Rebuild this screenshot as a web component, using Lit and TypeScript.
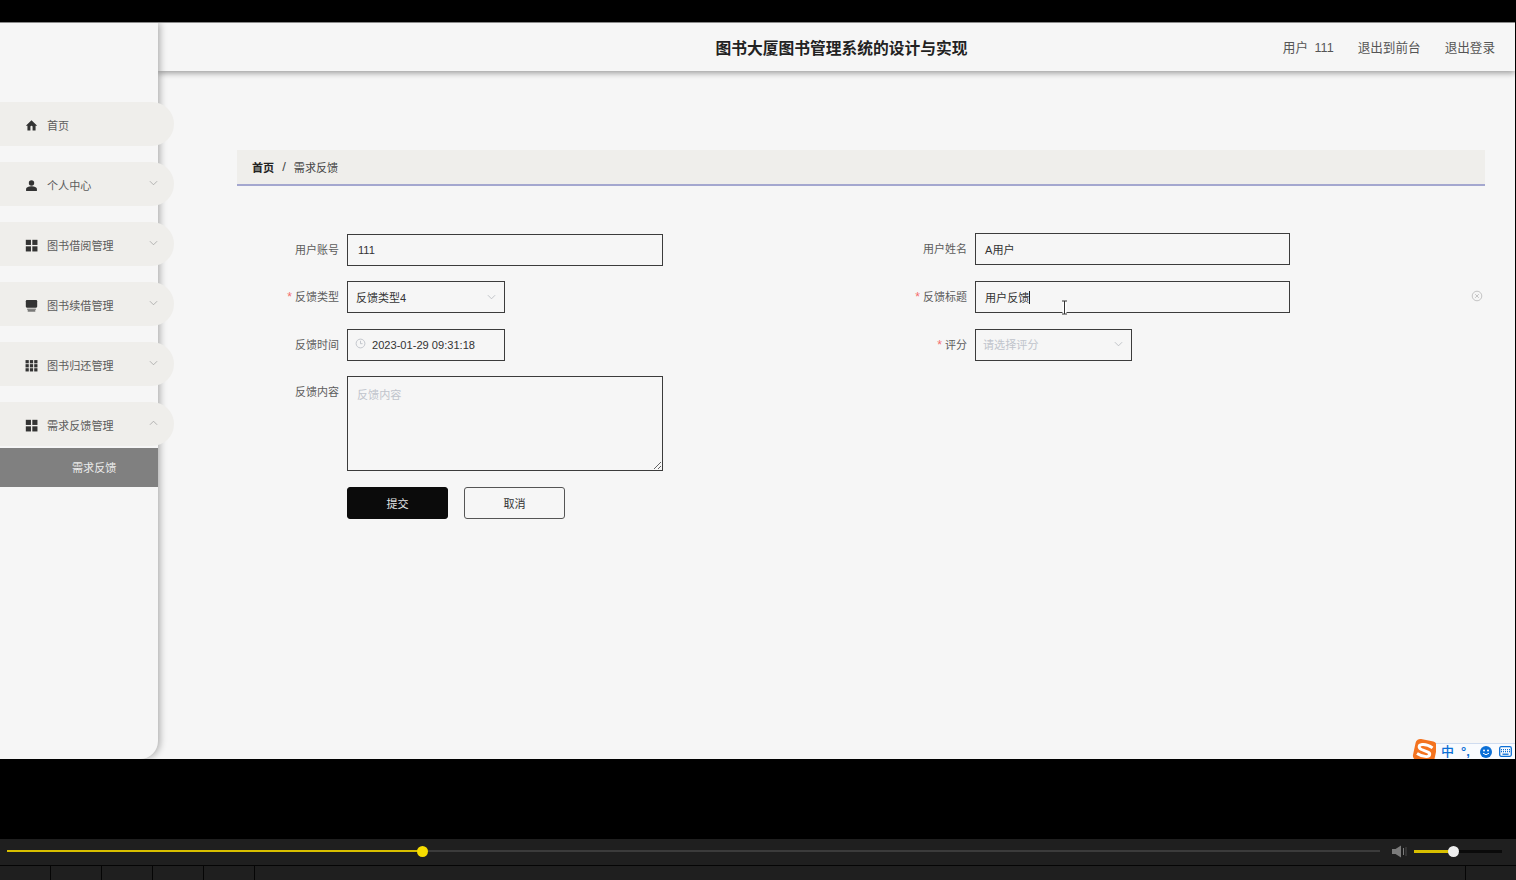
import { LitElement, css, html, svg } from 'lit'
import { customElement } from 'lit/decorators.js'

const icons = {
  home: svg`<path d="M10 21v-6.500a2 2 0 0 1 4 0V21h5.500v-8.500H22.500L12 2.500 1.500 12.500H4.500V21z"/>`,
  user: svg`<circle cx="12" cy="7.500" r="5"/><path d="M2 22v-3.500c0-3.500 6.500-5 10-5s10 1.500 10 5V22z"/>`,
  grid: svg`<rect x="1.500" y="1.500" width="9.500" height="9.500"/><rect x="13.500" y="1.500" width="9.500" height="9.500"/><rect x="1.500" y="13.500" width="9.500" height="9.500"/><rect x="13.500" y="13.500" width="9.500" height="9.500"/>`,
  store: svg`<path d="M3.500 2h17q2 0 2 2v10q0 2-2 2h-17q-2 0-2-2V4q0-2 2-2z"/><rect x="4" y="18" width="16" height="1.500"/><rect x="5" y="21" width="14" height="2"/>`,
  nine: svg`<rect x="1" y="2" width="6" height="6"/><rect x="9" y="2" width="6" height="6"/><rect x="17" y="2" width="6" height="6"/><rect x="1" y="9.500" width="6" height="6"/><rect x="9" y="9.500" width="6" height="6"/><rect x="17" y="9.500" width="6" height="6"/><rect x="1" y="17" width="6" height="6"/><rect x="9" y="17" width="6" height="6"/><rect x="17" y="17" width="6" height="6"/>`,
}

const chevron = (up = false) => html`
  <svg class="chevron" viewBox="0 0 10 6" fill="none" stroke="currentColor" stroke-width="0.9">
    <path d=${up ? 'M1 5l4-4 4 4' : 'M1 1l4 4 4-4'}/>
  </svg>
`

const menu = [
  { label: '首页', icon: icons.home, arrow: false },
  { label: '个人中心', icon: icons.user, arrow: true },
  { label: '图书借阅管理', icon: icons.grid, arrow: true },
  { label: '图书续借管理', icon: icons.store, arrow: true },
  { label: '图书归还管理', icon: icons.nine, arrow: true },
]

@customElement('app-root')
export class AppRoot extends LitElement {
  renderLabel(text: string, required = false) {
    return html`<label class="label">${required ? html`<i>*</i>` : ''}${text}</label>`
  }

  render() {
    return html`
      <div class="screen">
        <aside class="sidebar">
          <nav class="nav">
            ${menu.map(
              (m) => html`
                <div class="pill">
                  <svg class="icon" viewBox="0 0 24 24" fill="currentColor">${m.icon}</svg>
                  <span>${m.label}</span>
                  ${m.arrow ? chevron() : ''}
                </div>
              `
            )}
            <div class="group">
              <div class="pill">
                <svg class="icon" viewBox="0 0 24 24" fill="currentColor">${icons.grid}</svg>
                <span>需求反馈管理</span>
                ${chevron(true)}
              </div>
              <div class="sub">需求反馈</div>
            </div>
          </nav>
        </aside>

        <div class="main">
          <header class="header">
            <span></span>
            <h1>图书大厦图书管理系统的设计与实现</h1>
            <div class="links">
              <span class="who">用户 111</span>
              <span>退出到前台</span>
              <span>退出登录</span>
            </div>
          </header>

          <div class="content">
            <div class="crumb"><b>首页</b><em>/</em><span>需求反馈</span></div>

            <form class="form">
              <div class="col">
                <div class="row">
                  ${this.renderLabel('用户账号')}
                  <div class="field wide pad-11">111</div>
                </div>
                <div class="row">
                  ${this.renderLabel('反馈类型', true)}
                  <div class="field short select">反馈类型4 ${chevron()}</div>
                </div>
                <div class="row">
                  ${this.renderLabel('反馈时间')}
                  <div class="field short date">
                    <svg class="clock" viewBox="0 0 12 12" fill="none" stroke="currentColor" stroke-width="0.9">
                      <circle cx="6" cy="6" r="4.800"/><path d="M6 3v3.200h2.200"/>
                    </svg>
                    2023-01-29 09:31:18
                  </div>
                </div>
                <div class="row">
                  ${this.renderLabel('反馈内容')}
                  <textarea class="area" placeholder="反馈内容"></textarea>
                </div>
                <div class="actions">
                  <button type="button" class="btn primary">提交</button>
                  <button type="button" class="btn">取消</button>
                </div>
              </div>

              <div class="col right">
                <div class="row">
                  ${this.renderLabel('用户姓名')}
                  <div class="field wide">A用户</div>
                </div>
                <div class="row">
                  ${this.renderLabel('反馈标题', true)}
                  <div class="field wide title-field">
                    用户反馈<span class="caret"></span>
                    <svg class="ibeam" viewBox="0 0 7 15" fill="none">
                      <path d="M3.500 1v13" stroke="#fff" stroke-width="4"/>
                      <path d="M1 1h5M3.500 1v13M1 14h5" stroke="#333" stroke-width="1"/>
                    </svg>
                  </div>
                </div>
                <div class="row">
                  ${this.renderLabel('评分', true)}
                  <div class="field short select placeholder">请选择评分 ${chevron()}</div>
                </div>
              </div>

              <svg class="clear" viewBox="0 0 12 12" fill="none" stroke="#c4c4c4" stroke-width="1">
                <circle cx="6" cy="6" r="4.800"/><path d="M4.200 4.200l3.600 3.600M7.800 4.200l-3.600 3.600"/>
              </svg>
            </form>
          </div>
        </div>

        <div class="ime">
          <svg class="ime-logo" viewBox="0 0 25 25">
            <g transform="rotate(12 12.500 12.500)">
              <rect x="2" y="2" width="21" height="21" rx="4.500" fill="#f4731f"/>
              <path d="M19 8q-6-2.500-10.500-1C5 8.200 5.500 11 9 11.800l6.500 1.200c3 .6 2.800 3.600-.5 4.500q-4.500 1-9.500-1" fill="none" stroke="#fff" stroke-width="2.800"/>
            </g>
          </svg>
          <div class="ime-bar">
            <b>中</b>
            <span class="punct">°,</span>
            <svg class="ime-icon" viewBox="0 0 12 12">
              <circle cx="6" cy="6" r="6" fill="#0b6fd6"/>
              <circle cx="4" cy="4.500" r="1" fill="#fff"/><circle cx="8" cy="4.500" r="1" fill="#fff"/>
              <path d="M3 7.200q3 3 6 0" fill="none" stroke="#fff" stroke-width="1"/>
            </svg>
            <svg class="ime-icon kb" viewBox="0 0 13 11" fill="none" stroke="#0b6fd6" stroke-width="1.300">
              <rect x="0.700" y="0.700" width="11.600" height="9.600" rx="1.500"/>
              <path d="M2 3.700h9M2 5.700h9" stroke-dasharray="1 1"/><path d="M3.500 8.200h6"/>
            </svg>
          </div>
        </div>
      </div>

      <div class="player">
        <div class="track">
          <div class="played"></div>
          <div class="thumb"></div>
        </div>
        <svg class="speaker" viewBox="0 0 15 13" fill="#7b7b7b">
          <path d="M0 4h3.500L9 .500v12L3.500 9H0z"/><rect x="11" y="3" width="1" height="7"/><rect x="13.500" y="2" width="1" height="9" fill="#4a4a4a"/>
        </svg>
        <div class="volume">
          <div class="vol-fill"></div>
          <div class="vol-thumb"></div>
        </div>
      </div>

      <div class="tabs">
        <span></span><span></span><span></span><span></span><span></span><span class="rest"></span><span class="last"></span>
      </div>
    `
  }

  static styles = css`
    :host {
      display: block;
      height: 880px;
      padding-top: 22px;
      box-sizing: border-box;
      overflow: hidden;
      background: #000;
      font-family: "Liberation Sans", "Noto Sans CJK SC", sans-serif;
      font-size: 11.1px;
      color: #606266;
    }

    .screen {
      position: relative;
      display: flex;
      width: 1515px;
      height: 737px;
      box-sizing: border-box;
      border-top: 1px solid #8a8a8a;
      overflow: hidden;
      background: #f6f6f6;
    }

    .sidebar {
      flex: none;
      position: relative;
      z-index: 2;
      width: 158px;
      padding-top: 79px;
      box-sizing: border-box;
      background: #f6f6f6;
      border-radius: 0 0 18px 0;
      box-shadow: 2px 0 7px rgba(0, 0, 0, 0.3);
    }
    .nav {
      display: flex;
      flex-direction: column;
      gap: 16px;
      width: 174px;
    }
    .pill {
      display: flex;
      align-items: center;
      height: 44px;
      padding: 2px 0 0 25px;
      box-sizing: border-box;
      background: #efeeeb;
      border-radius: 0 22px 22px 0;
      color: #5c5c5c;
    }
    .pill .icon {
      width: 13px;
      height: 13px;
      margin-right: 9px;
      color: #333;
    }
    .pill .chevron {
      width: 9px;
      height: 6px;
      margin: -4px 16px 0 auto;
      color: #a5a5a5;
    }
    .sub {
      width: 158px;
      height: 39px;
      margin-top: 2px;
      padding-left: 72px;
      box-sizing: border-box;
      line-height: 40px;
      background: #808080;
      color: #ececec;
    }

    .main {
      flex: 1;
      min-width: 0;
      display: flex;
      flex-direction: column;
    }
    .header {
      flex: none;
      position: relative;
      z-index: 1;
      display: grid;
      grid-template-columns: 1fr auto 1fr;
      align-items: center;
      height: 48px;
      padding: 0 20px 0 30px;
      background: #f6f6f6;
      box-shadow: 0 2px 6px rgba(0, 0, 0, 0.38);
    }
    h1 {
      margin: 0;
      font-size: 15.75px;
      font-weight: 700;
      color: #222;
    }
    .links {
      display: flex;
      justify-content: flex-end;
      gap: 24px;
      margin-top: -1px;
      font-size: 12.6px;
      color: #555;
    }
    .who {
      word-spacing: 3px;
    }

    .content {
      padding: 79px 30px 0 79px;
    }
    .crumb {
      display: flex;
      align-items: center;
      height: 36px;
      padding: 0 0 1px 15px;
      box-sizing: border-box;
      background: #efeeeb;
      border-bottom: 2px solid #a4a7cf;
      color: #444;
    }
    .crumb b {
      color: #222;
    }
    .crumb em {
      margin: 0 8px;
      font-size: 13px;
      font-style: normal;
      color: #444;
    }

    .form {
      position: relative;
      display: flex;
      margin-top: 47.500px;
    }
    .col {
      flex: none;
      display: flex;
      flex-direction: column;
      gap: 15.500px;
      width: 628px;
    }
    .col.right {
      width: 620px;
    }
    .col.right .row:first-child {
      margin-top: -1px;
      margin-bottom: 1px;
    }
    .row {
      display: flex;
      gap: 8px;
    }
    .label {
      flex: none;
      width: 102px;
      line-height: 32px;
      font-size: 11px;
      text-align: right;
      color: #5c5c5c;
    }
    .label i {
      margin-right: 3px;
      font-size: 12px;
      font-style: normal;
      color: #f56c6c;
    }
    .field {
      position: relative;
      display: flex;
      align-items: center;
      height: 32px;
      padding-left: 9px;
      box-sizing: border-box;
      border: 1px solid #3c3c3c;
      color: #333;
    }
    .wide {
      width: 316px;
    }
    .right .wide {
      width: 315px;
    }
    .short {
      width: 158px;
    }
    .right .short {
      width: 157px;
    }
    .pad-11 {
      padding-left: 10px;
    }
    .select {
      padding-left: 8px;
      font-size: 11px;
    }
    .select .chevron {
      width: 9px;
      height: 6px;
      margin: 0 8px 0 auto;
      color: #b5b8be;
    }
    .placeholder {
      padding: 0 0 1px 7px;
      font-size: 11.1px;
      color: #c0c4cc;
    }
    .date .clock {
      width: 11px;
      height: 11px;
      margin: -3px 6px 0 -2px;
      color: #b9bcc3;
    }
    .caret {
      width: 1px;
      height: 13px;
      background: #222;
    }
    .ibeam {
      position: absolute;
      left: 85px;
      top: 18px;
      width: 7px;
      height: 15px;
    }
    .area {
      width: 316px;
      height: 95px;
      margin: 0;
      padding: 9px 9px;
      box-sizing: border-box;
      border: 1px solid #3c3c3c;
      border-radius: 0;
      outline: none;
      background: transparent;
      font: inherit;
    }
    .area::placeholder {
      color: #c0c4cc;
    }
    .actions {
      display: flex;
      gap: 16px;
      margin: 0.500px 0 0 110px;
    }
    .btn {
      width: 101px;
      height: 32px;
      padding: 0;
      border: 1px solid #555;
      border-radius: 3px;
      background: #f6f6f6;
      font: inherit;
      color: #333;
    }
    .btn.primary {
      border-color: #0b0b0b;
      background: #0b0b0b;
      color: #e8e8e8;
    }
    .clear {
      position: absolute;
      left: 1234px;
      top: 56px;
      width: 12px;
      height: 12px;
    }

    .ime {
      position: absolute;
      z-index: 3;
      right: 0;
      bottom: 0;
      display: flex;
      align-items: flex-end;
    }
    .ime-logo {
      flex: none;
      width: 26px;
      height: 26px;
      margin: 0 -2px -5px -1px;
    }
    .ime-bar {
      display: flex;
      align-items: center;
      width: 79px;
      height: 16px;
      padding: 0 0 0 5px;
      box-sizing: border-box;
      background: #f9fbfe;
      border-top: 1px solid #cfdcf0;
      line-height: 13px;
      color: #0b6fd6;
      font-size: 13px;
    }
    .ime-bar b {
      font-weight: 500;
    }
    .punct {
      margin: 0 0 0 7px;
      width: 13px;
      font-weight: 700;
    }
    .ime-icon {
      width: 12px;
      height: 12px;
      margin-left: 6px;
    }
    .ime-icon.kb {
      width: 13px;
      height: 11px;
      margin-left: 7px;
    }

    .player {
      display: flex;
      align-items: center;
      height: 26px;
      margin-top: 80px;
      padding: 0 0 2px 7px;
      box-sizing: border-box;
      background: #1f1f1f;
    }
    .track {
      position: relative;
      width: 1373px;
      height: 2px;
      background: #3b3b3b;
    }
    .played {
      width: 415px;
      height: 2px;
      background: #d8bf00;
    }
    .thumb {
      position: absolute;
      left: 410px;
      top: -4.500px;
      width: 11px;
      height: 11px;
      border-radius: 50%;
      background: #f6dc00;
    }
    .speaker {
      width: 15px;
      height: 13px;
      margin-left: 12px;
    }
    .volume {
      position: relative;
      width: 88px;
      height: 3px;
      margin-left: 7px;
      background: #0a0a0a;
    }
    .vol-fill {
      width: 39px;
      height: 3px;
      background: #d8bf00;
    }
    .vol-thumb {
      position: absolute;
      left: 34px;
      top: -4px;
      width: 11px;
      height: 11px;
      border-radius: 50%;
      background: #eee;
    }

    .tabs {
      display: flex;
      height: 15px;
      border-top: 1px solid #050505;
      box-sizing: border-box;
      background: #1f1f1f;
    }
    .tabs span {
      width: 50px;
      border-right: 1px solid #050505;
    }
    .tabs .rest {
      width: 1210px;
    }
    .tabs .last {
      flex: 1;
      border-right: 0;
    }
  `
}

declare global {
  interface HTMLElementTagNameMap {
    'app-root': AppRoot
  }
}
